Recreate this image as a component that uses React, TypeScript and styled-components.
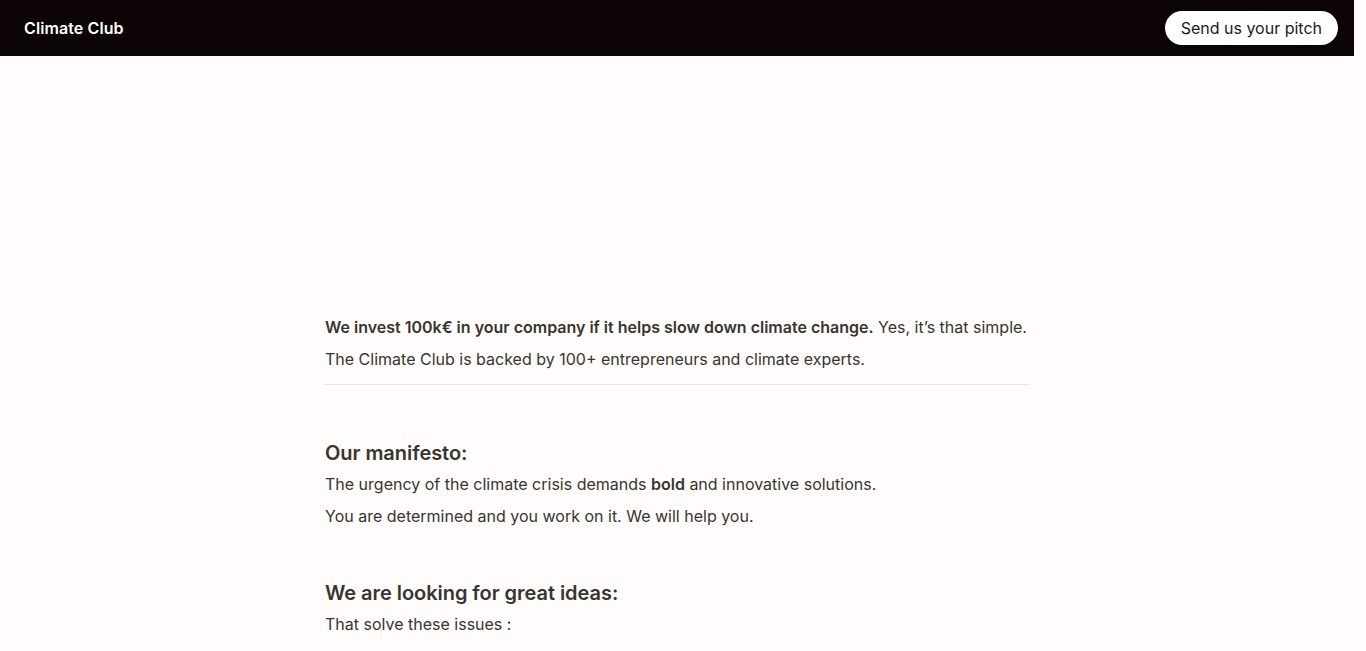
import React from "react";
import styled, { createGlobalStyle } from "styled-components";

const GlobalStyle = createGlobalStyle`
  html, body {
    margin: 0;
    padding: 0;
    background: #fffcfb;
  }
  body {
    font-family: Inter, "Noto Sans", sans-serif;
    color: #37352f;
    -webkit-font-smoothing: antialiased;
  }
  #root {
    width: calc(100vw - 12px);
  }
`;

const Header = styled.header`
  height: 56px;
  background: #0b0304;
  display: flex;
  align-items: center;
  justify-content: space-between;
  padding: 0 16px 0 24px;
  box-sizing: border-box;
`;

const Brand = styled.div`
  color: #ffffff;
  font-size: 16px;
  font-weight: 600;
  letter-spacing: 0.1px;
`;

const PitchButton = styled.button`
  background: #ffffff;
  color: #1a1a1a;
  border: none;
  border-radius: 17px;
  height: 34px;
  padding: 0 16px;
  font-family: Inter, sans-serif;
  font-size: 16px;
  line-height: 24px;
  cursor: pointer;
`;

const Cover = styled.div`
  height: 255px;
`;

const Content = styled.main`
  width: 708px;
  margin: 0 auto;
  display: flex;
  flex-direction: column;
`;

const Text = styled.p`
  margin: 0;
  padding: 4px 2px;
  font-size: 16px;
  line-height: 24px;
  color: #37352f;

  strong {
    font-weight: 600;
  }
`;

const Divider = styled.hr`
  margin: 9px 0 0;
  border: none;
  border-top: 1px solid #e9e7e5;
  width: 707px;
`;

const Heading = styled.h2<{ $gap: number }>`
  margin: ${(p) => p.$gap}px 0 0;
  padding: 0 2px;
  font-size: 20px;
  line-height: 30px;
  font-weight: 600;
  letter-spacing: -0.05px;
  color: #37352f;
`;

export default function App() {
  return (
    <>
      <GlobalStyle />
      <Header>
        <Brand>Climate Club</Brand>
        <PitchButton>Send us your pitch</PitchButton>
      </Header>
      <Cover />
      <Content>
        <Text>
          <strong>We invest 100k€ in your company if it helps slow down climate change.</strong>{" "}
          Yes, it’s that simple.
        </Text>
        <Text>The Climate Club is backed by 100+ entrepreneurs and climate experts.</Text>
        <Divider />
        <Heading $gap={53}>Our manifesto:</Heading>
        <Text>
          The urgency of the climate crisis demands <strong>bold</strong> and innovative solutions.
        </Text>
        <Text>You are determined and you work on it. We will help you.</Text>
        <Heading $gap={46}>We are looking for great ideas:</Heading>
        <Text>That solve these issues :</Text>
      </Content>
    </>
  );
}
